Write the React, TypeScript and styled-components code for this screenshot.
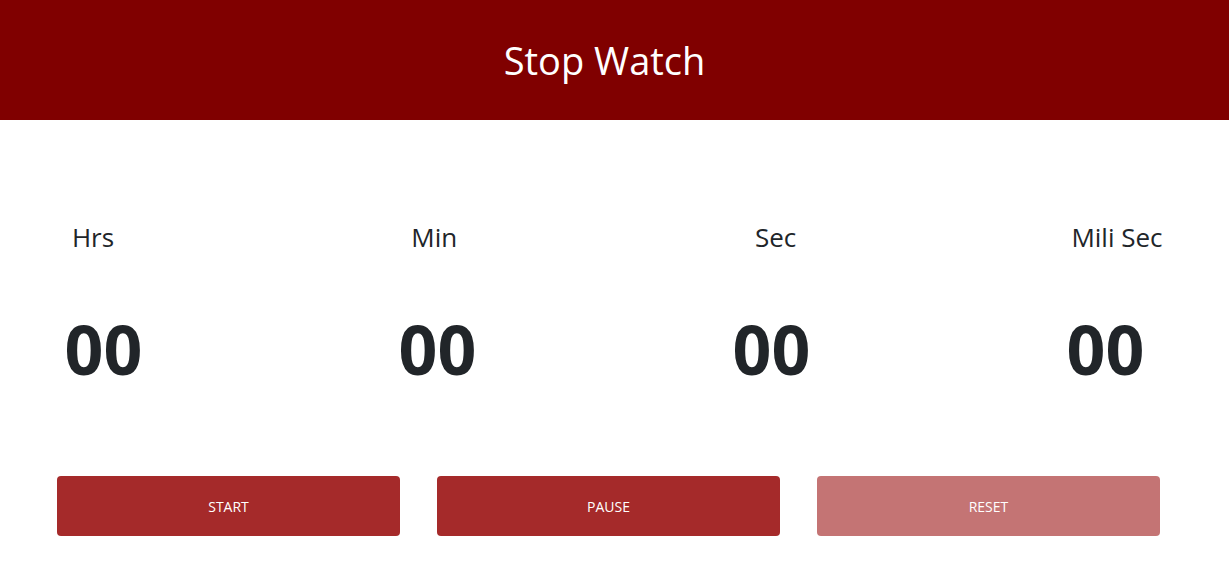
import React from "react";
import styled, { createGlobalStyle } from "styled-components";

const Global = createGlobalStyle`
  html, body { margin: 0; padding: 0; background: #ffffff; overflow: hidden; }
  body { font-family: "Open Sans", "Noto Sans", "Liberation Sans", sans-serif; color: #212529; }
`;

const Page = styled.div`
  width: 1229px;
  display: flex;
  flex-direction: column;
`;

const Header = styled.header`
  height: 120px;
  background: #800000;
  display: flex;
  align-items: center;
  justify-content: center;
  padding-right: 20px;
`;

const Title = styled.h1`
  margin: 0;
  font-size: 38px;
  font-weight: 400;
  color: #ffffff;
  line-height: 1;
`;

const LabelRow = styled.div`
  display: grid;
  grid-template-columns: repeat(4, 341.33px);
  margin: 99px 0 0 -77.7px;
`;

const Label = styled.h3`
  margin: 0;
  text-align: center;
  font-size: 26px;
  font-weight: 500;
  line-height: 36px;
`;

const ValueRow = styled.div`
  display: grid;
  grid-template-columns: repeat(4, 334px);
  margin: 54px 0 0 -63.5px;
`;

const Value = styled.div`
  text-align: center;
  font-size: 68px;
  font-weight: 700;
  line-height: 80px;
  color: #212529;
`;

const ButtonRow = styled.div`
  display: flex;
  gap: 37px;
  padding-left: 57px;
  margin-top: 87px;
`;

const Button = styled.button<{ $faded?: boolean }>`
  width: 343px;
  height: 60px;
  border: none;
  border-radius: 4px;
  background: #a52a2a;
  opacity: ${(p) => (p.$faded ? 0.65 : 1)};
  color: #ffffff;
  font-family: "Open Sans", "Noto Sans", sans-serif;
  font-size: 14px;
  text-transform: uppercase;
  cursor: pointer;
`;

export default function App() {
  const labels = ["Hrs", "Min", "Sec", "Mili Sec"];
  return (
    <Page>
      <Global />
      <Header>
        <Title>Stop Watch</Title>
      </Header>
      <LabelRow>
        {labels.map((l) => (
          <Label key={l}>{l}</Label>
        ))}
      </LabelRow>
      <ValueRow>
        {labels.map((l) => (
          <Value key={l}>00</Value>
        ))}
      </ValueRow>
      <ButtonRow>
        <Button>Start</Button>
        <Button>Pause</Button>
        <Button $faded>Reset</Button>
      </ButtonRow>
    </Page>
  );
}
